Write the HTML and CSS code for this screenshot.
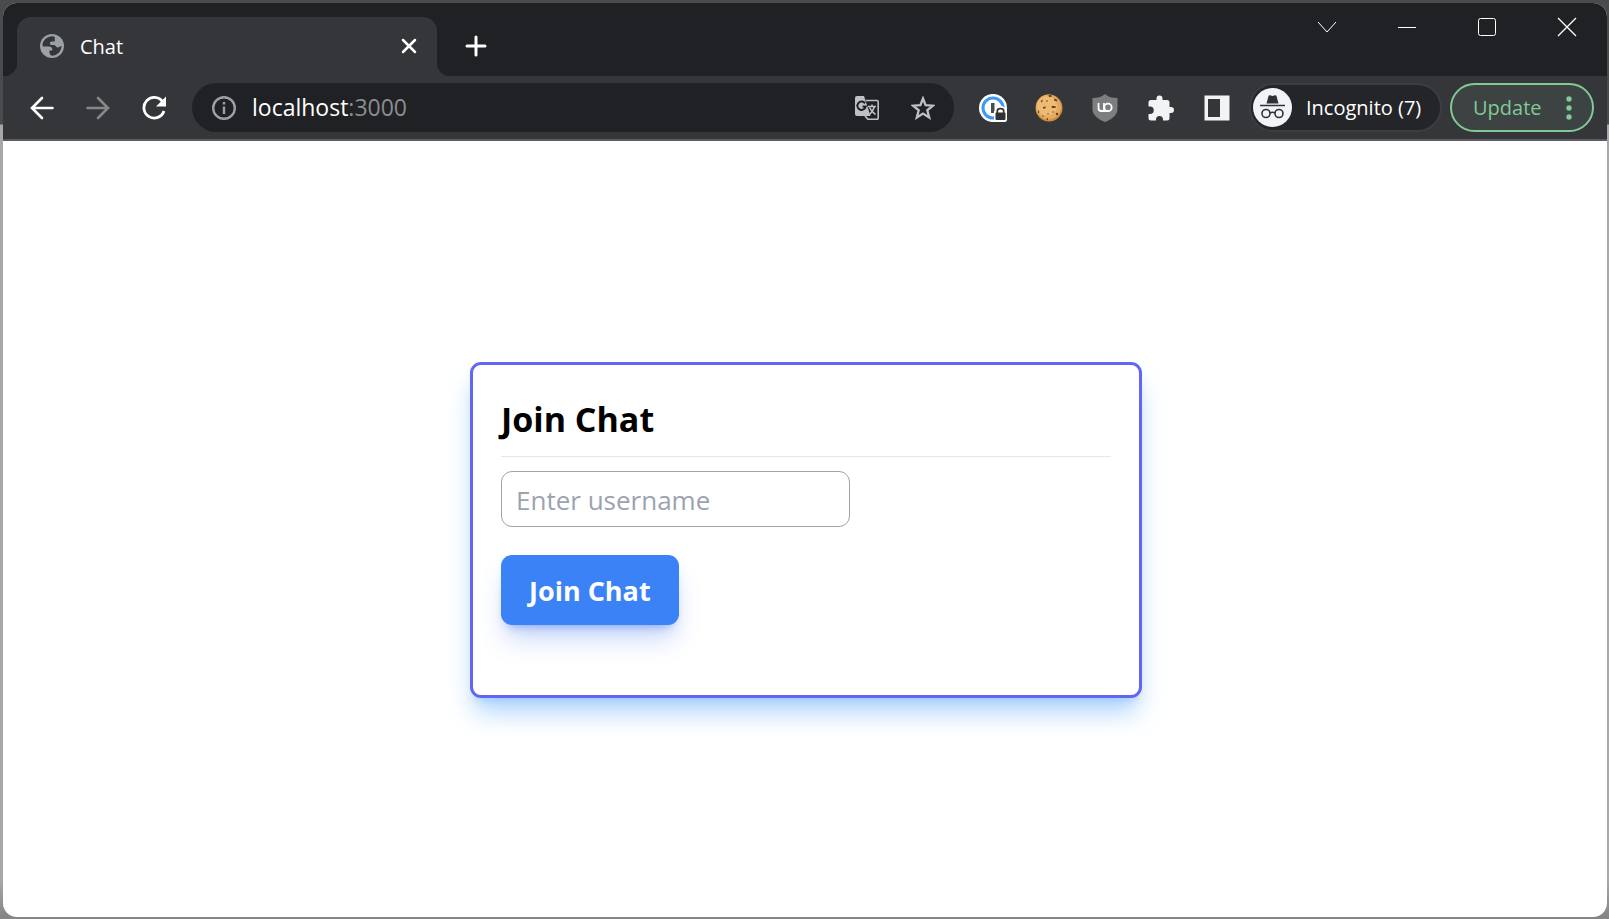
FILE: index.html
```html
<!DOCTYPE html>
<html lang="en">
<head>
<meta charset="utf-8">
<title>Chat</title>
<link rel="stylesheet" href="styles.css">
</head>
<body>
<div class="window">
  <header class="tab-strip">
    <div class="tab">
      <svg class="icon" viewBox="0 0 24 24"><circle cx="12" cy="12" r="12" fill="#9aa0a6"/><path d="M13.500 2.400C8 1.800 3 5.500 2.400 11.200L3 12.400H8.500C11 12.400 12.300 13.500 12.300 15.500V16.500H9.500V18.500C9.500 20 10.500 21.500 12 21.700C17 21.700 21.300 17.500 21.600 12L20 12.600C18.500 14 17 13.800 16 12.400L14.500 11H11C9.500 10.500 9.700 8 11 7.600H14.500C15.500 6 14 5 15 3.200Z" fill="#35363a"/></svg>
      <span class="tab-title">Chat</span>
      <button class="tab-button" aria-label="Close tab"><svg class="small-icon" viewBox="0 0 16 16" fill="none" stroke="#fff" stroke-width="2.500" stroke-linecap="round"><path d="M2 2L14 14M14 2L2 14"/></svg></button>
    </div>
    <button class="new-tab" aria-label="New tab"><svg class="icon" viewBox="0 0 24 24" fill="none" stroke="#fff" stroke-width="3" stroke-linecap="round"><path d="M12 3V21M3 12H21"/></svg></button>
    <div class="controls">
      <button aria-label="Search tabs"><svg class="control-icon" viewBox="0 0 20 20"><path d="M1 5L10 15L19 5"/></svg></button>
      <button aria-label="Minimize"><svg class="control-icon" viewBox="0 0 20 20"><path d="M1 10.500H19"/></svg></button>
      <button aria-label="Maximize"><svg class="control-icon" viewBox="0 0 20 20"><rect x="1.500" y="1.500" width="17" height="17" rx="2"/></svg></button>
      <button aria-label="Close"><svg class="control-icon" viewBox="0 0 20 20"><path d="M1 1L19 19M19 1L1 19" stroke-width="1.300"/></svg></button>
    </div>
  </header>
  <nav class="toolbar">
    <div class="nav-buttons">
      <button aria-label="Back"><svg class="icon" viewBox="0 0 24 24" fill="none" stroke="#fff" stroke-width="2.600" stroke-linecap="round"><path d="M22.500 12H2.500M12 2L2 12L12 22"/></svg></button>
      <button aria-label="Forward"><svg class="icon" viewBox="0 0 24 24" fill="none" stroke="#86888a" stroke-width="2.600" stroke-linecap="round"><path d="M1.500 12H21.500M12 2L22 12L12 22"/></svg></button>
      <button aria-label="Reload"><svg class="icon" viewBox="0 0 24 24"><path d="M20.500 5.600A10.300 10.300 0 1 0 22 15" fill="none" stroke="#fff" stroke-width="2.800"/><path d="M24 0.500V10.500H14Z" fill="#fff"/></svg></button>
    </div>
    <div class="address">
      <svg class="icon" viewBox="0 0 24 24"><circle cx="12" cy="12" r="10.800" fill="none" stroke="#9aa0a6" stroke-width="2.400"/><path d="M10.800 6H13.200V8.600H10.800ZM10.800 10.600H13.200V18H10.800Z" fill="#9aa0a6"/></svg>
      <span class="url">localhost<span class="port">:3000</span></span>
      <button aria-label="Translate this page"><svg class="icon" viewBox="0 0 24 24"><path d="M2 0H9L15.500 20H2Q0 20 0 18V2Q0 0 2 0Z" fill="#bdc1c6"/><path d="M11 4.500H22Q23.200 4.500 23.200 6V22Q23.200 23.300 22 23.300H13L10 20" fill="none" stroke="#bdc1c6" stroke-width="1.600"/><path d="M10 7.300A4.200 4.200 0 1 0 10.700 10.500H7.500" fill="none" stroke="#202124" stroke-width="2"/><path d="M13 10.500H21M17 8.500V10.500M19.500 10.500C18.500 14 16.500 17 14 19M14.500 11.500C16 14.500 18 17 20.500 18.500" fill="none" stroke="#bdc1c6" stroke-width="1.600"/></svg></button>
      <button aria-label="Bookmark this tab"><svg class="icon" viewBox="0 0 24 24" fill="none" stroke="#bdc1c6" stroke-width="2.300"><path d="M12 2.500L14.600 9.200L22 9.700L16.300 14.300L18.200 21.500L12 17.500L5.800 21.500L7.700 14.300L2 9.700L9.400 9.200Z"/></svg></button>
    </div>
    <div class="extensions">
      <button aria-label="Password manager"><svg class="extension-icon" viewBox="0 0 28 28"><path d="M14 0A14 14 0 0 1 28 14V25Q28 28 25 28H14A14 14 0 0 1 14 0Z" fill="#fff"/><circle cx="14" cy="14" r="10" fill="none" stroke="#3b98fc" stroke-width="3"/><path d="M12 9H15.500V19H12Z" fill="#4c4d50"/><path d="M15 17H17V14Q21.500 9 26 14V17H28V25Q28 28 25 28H15Z" fill="#fff"/><rect x="16.500" y="18.500" width="10" height="7.500" rx="1" fill="#303134"/><path d="M18.300 19V17Q18.300 14.700 21.500 14.700T24.700 17V19" fill="none" stroke="#303134" stroke-width="1.700"/></svg></button>
      <button aria-label="Cookies"><svg class="extension-icon" viewBox="0 0 28 28"><circle cx="14" cy="14" r="13.500" fill="#ce8f3e"/><circle cx="13.500" cy="13" r="12.500" fill="#e3ab60"/><circle cx="12" cy="12" r="10" fill="#edbb74"/><g fill="#753a1b"><path d="M5.500 7L8 5.500L7 8.500ZM13.500 1L16.500 1L16.500 3L14 3ZM19.500 4.500L22.500 6L21.500 7.500L19 6.500ZM8 13L10.500 12.500L10.500 14.500L8 14.500ZM16.500 12H20.500V14H17ZM3 16L4.500 18L3 19.500ZM11 25L13 24V26.500Z"/><circle cx="12" cy="7" r="0.800"/><circle cx="13" cy="20" r="0.700"/><circle cx="18" cy="18" r="0.700"/><circle cx="22" cy="20" r="1.200"/><circle cx="8" cy="22" r="0.700"/></g></svg></button>
      <button aria-label="Content blocker"><svg class="extension-icon" viewBox="0 0 28 28"><path d="M14 0C17.500 3 21.500 4 26.500 4V15C26.500 21 21 25.500 14 28C7 25.500 1.500 21 1.500 15V4C6.500 4 10.500 3 14 0Z" fill="#7d7e80"/><path d="M7.500 9V14Q7.500 17 10.200 17H17.500M13 17V9" fill="none" stroke="#fff" stroke-width="1.800"/><circle cx="17" cy="13.400" r="3.700" fill="none" stroke="#fff" stroke-width="1.800"/></svg></button>
      <button aria-label="Extensions"><svg class="extension-icon" viewBox="0 0 28 28"><path d="M4 6H9.500V4.500A3 3 0 0 1 15.500 4.500V6H20Q22.500 6 22.500 8.500V13H24A3 3 0 0 1 24 19H22.500V24Q22.500 26.500 20 26.500H16V25.500A3.500 3.500 0 0 0 9 25.500V26.500H4Q1.500 26.500 1.500 24V20H3A3.500 3.500 0 0 0 3 12.500H1.500V8.500Q1.500 6 4 6Z" fill="#f1f3f4"/></svg></button>
      <button aria-label="Side panel"><svg class="extension-icon" viewBox="0 0 28 28"><path d="M1.500 1.500H26.500V26.500H1.500ZM5 5V23H17V5Z" fill="#f1f3f4" fill-rule="evenodd"/></svg></button>
    </div>
    <button class="profile"><svg class="avatar" viewBox="0 0 39 39"><circle cx="19.500" cy="19.500" r="19.500" fill="#f1f3f8"/><path d="M13.500 15.500L15.500 8Q16 7 17 7.300L19.500 8L22 7.300Q23 7 23.500 8L25.500 15.500Z" fill="#303134"/><path d="M7 17.500H32" stroke="#303134" stroke-width="1.500"/><g fill="none" stroke="#303134" stroke-width="1.600"><circle cx="13" cy="25.500" r="4"/><circle cx="26" cy="25.500" r="4"/><path d="M17 25Q19.500 23.500 22 25"/></g></svg><span>Incognito (7)</span></button>
    <button class="update"><span>Update</span><svg class="dots" viewBox="0 0 6 24" fill="#81c995"><circle cx="3" cy="3" r="2.700"/><circle cx="3" cy="12" r="2.700"/><circle cx="3" cy="21" r="2.700"/></svg></button>
  </nav>
  <main class="page">
    <form class="card">
      <h1 class="heading">Join Chat</h1>
      <input class="username" type="text" placeholder="Enter username" aria-label="Username">
      <button class="join" type="button">Join Chat</button>
    </form>
  </main>
</div>
</body>
</html>
```
FILE: styles.css
```css
* { box-sizing: border-box; }
body {
  margin: 0;
  min-height: 100vh;
  display: flex;
  background: linear-gradient(#4a4b4d 0, #4a4b4d 124px, #a8a8a8 125px, #a8a8a8 880px, #858585 916px);
  font-family: "Open Sans", "Noto Sans", sans-serif;
}
button {
  display: flex;
  align-items: center;
  justify-content: center;
  padding: 0;
  border: 0;
  background: none;
  color: inherit;
  font: inherit;
}
svg { display: block; flex: none; }
.window {
  flex: 1;
  display: flex;
  flex-direction: column;
  margin: 3px 2px 2px 3px;
  border-radius: 14px;
  overflow: hidden;
  background: #fff;
}
.icon { width: 24px; height: 24px; }
.small-icon { width: 16px; height: 16px; }
.tab-strip {
  display: flex;
  height: 73px;
  padding: 14px 0 0 14px;
  background: #202124;
  color: #fff;
  font-size: 20px;
}
.tab {
  position: relative;
  display: flex;
  align-items: center;
  gap: 16px;
  width: 420px;
  padding: 0 20px 1px 23px;
  border-radius: 14px 14px 0 0;
  background: #35363a;
}
.tab::before, .tab::after {
  content: "";
  position: absolute;
  bottom: 0;
  width: 14px;
  height: 14px;
}
.tab::before { right: 100%; background: radial-gradient(circle at 0 0, #202124 14px, #35363a 15px); }
.tab::after { left: 100%; background: radial-gradient(circle at 100% 0, #202124 14px, #35363a 15px); }
.tab-title { flex: 1; }
.new-tab { width: 77px; padding-bottom: 1px; }
.controls { display: flex; align-items: flex-start; margin: -14px 0 0 auto; }
.controls button { width: 80px; height: 48px; }
.control-icon { width: 20px; height: 20px; fill: none; stroke: #fff; stroke-width: 1; }
.toolbar {
  display: flex;
  align-items: center;
  height: 65px;
  padding: 0 13px 0 27px;
  border-bottom: 2px solid #5c5c60;
  background: #35363a;
  color: #fff;
  font-size: 20px;
}
.nav-buttons { display: flex; gap: 32px; margin-right: 26px; }
.address {
  flex: 1;
  display: flex;
  align-items: center;
  gap: 32px;
  height: 49px;
  padding: 0 19px 0 20px;
  border-radius: 25px;
  background: #202124;
  font-size: 23px;
}
.url { flex: 1; margin-left: -16px; padding-bottom: 2px; }
.port { color: #8b8d90; }
.extensions { display: flex; gap: 28px; margin: 0 18px 0 25px; }
.extension-icon { width: 28px; height: 28px; }
.profile {
  justify-content: flex-start;
  gap: 14px;
  width: 193px;
  height: 49px;
  padding: 0 2px;
  border: 2px solid #3c3d41;
  border-radius: 25px;
  background: #242529;
  white-space: nowrap;
}
.avatar { width: 39px; height: 39px; }
.update {
  justify-content: space-between;
  width: 144px;
  height: 49px;
  margin-left: 8px;
  padding: 0 20px 0 21px;
  border: 2px solid #81c995;
  border-radius: 25px;
  background: #3d4242;
  color: #81c995;
}
.dots { width: 6px; height: 24px; }
.page {
  flex: 1;
  display: flex;
  align-items: center;
  justify-content: center;
  padding: 30px 28px 28px 30px;
}
.card {
  display: flex;
  flex-direction: column;
  align-items: flex-start;
  width: 672px;
  padding: 28px 28px 70px;
  border: 3px solid #6366f1;
  border-radius: 11px;
  background: #fff;
  box-shadow: 0 18px 26px -5px #93c5fdcc, 0 7px 11px -7px #93c5fd;
}
.heading {
  width: 100%;
  margin: 0 0 14px;
  padding: 2px 0 12px;
  border-bottom: 1px solid #e5e7eb;
  font-size: 34px;
  line-height: 49px;
}
.username {
  width: 349px;
  height: 56px;
  margin-bottom: 28px;
  padding: 2px 14px 0;
  border: 1px solid #9ca3af;
  border-radius: 11px;
  background: #fff;
  font: 26px "Open Sans", sans-serif;
}
.username::placeholder { color: #9ca3af; opacity: 1; }
.join {
  height: 70px;
  padding: 0 28px;
  border-radius: 11px;
  background: #3b82f6;
  box-shadow: 0 18px 26px -5px #2563eb44, 0 7px 11px -7px #2563eb88;
  color: #fff;
  font-size: 27px;
  font-weight: 700;
}
```
